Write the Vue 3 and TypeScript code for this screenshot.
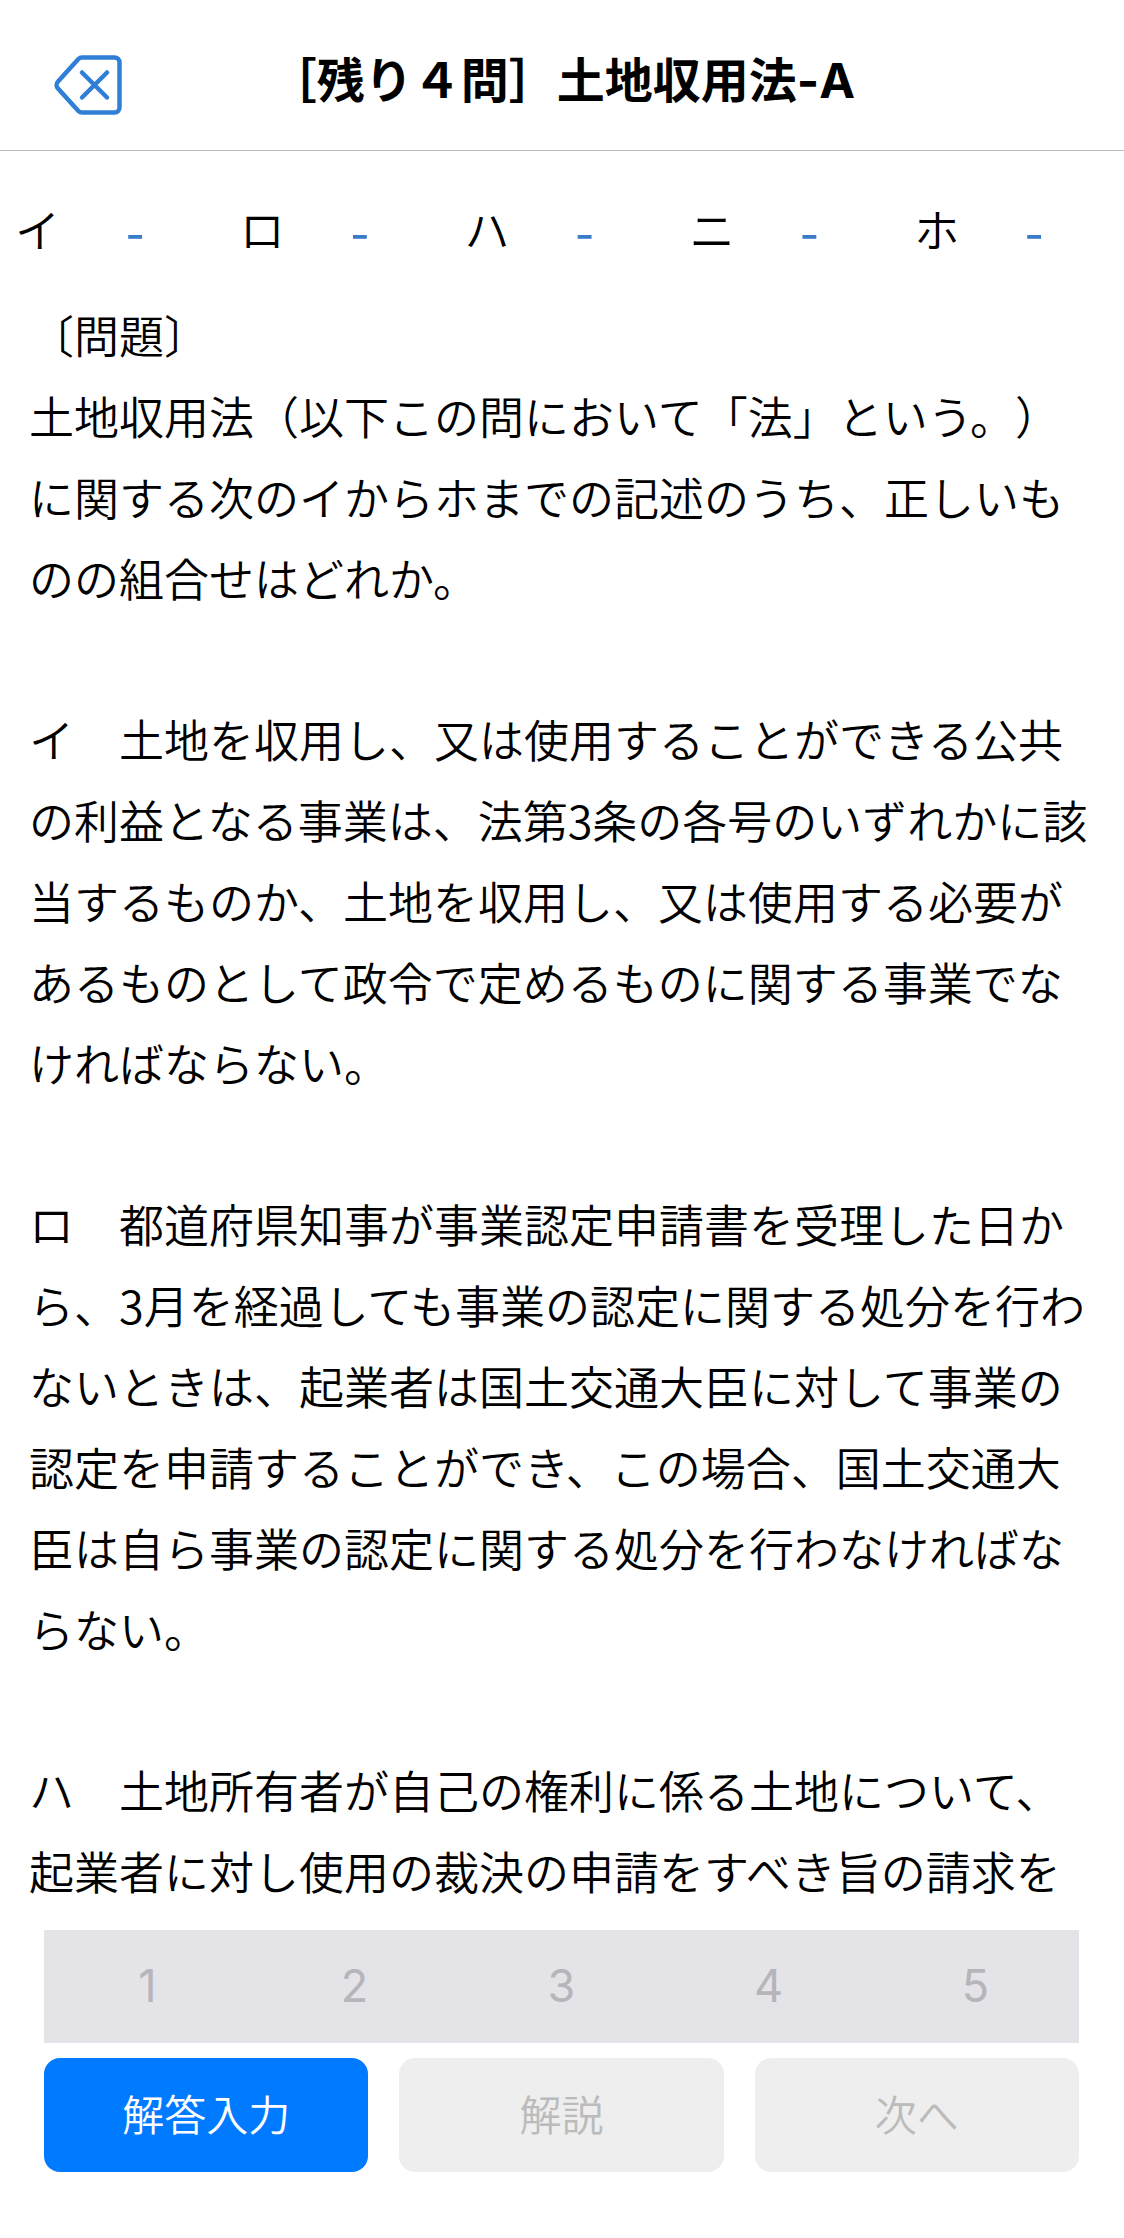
<script setup lang="ts">
const labels: string[] = ['イ', 'ロ', 'ハ', 'ニ', 'ホ']
const choices: number[] = [1, 2, 3, 4, 5]
const body: string = [
  '〔問題〕',
  '土地収用法（以下この問において「法」という。）',
  'に関する次のイからホまでの記述のうち、正しいも',
  'のの組合せはどれか。',
  '',
  'イ　土地を収用し、又は使用することができる公共',
  'の利益となる事業は、法第3条の各号のいずれかに該',
  '当するものか、土地を収用し、又は使用する必要が',
  'あるものとして政令で定めるものに関する事業でな',
  'ければならない。',
  '',
  'ロ　都道府県知事が事業認定申請書を受理した日か',
  'ら、3月を経過しても事業の認定に関する処分を行わ',
  'ないときは、起業者は国土交通大臣に対して事業の',
  '認定を申請することができ、この場合、国土交通大',
  '臣は自ら事業の認定に関する処分を行わなければな',
  'らない。',
  '',
  'ハ　土地所有者が自己の権利に係る土地について、',
  '起業者に対し使用の裁決の申請をすべき旨の請求を',
].join('\n')
</script>

<template>
  <div class="page">
    <header class="header">
      <div class="back">
        <svg class="back-icon" width="68" height="60" viewBox="0 0 68 60" fill="none">
          <path d="M28 2.500H60.500a5 5 0 0 1 5 5V52.500a5 5 0 0 1-5 5H28a5 5 0 0 1-3.600-1.500L4 33.500a5 5 0 0 1 0-7L24.400 4a5 5 0 0 1 3.600-1.500Z" stroke="#2f7fd6" stroke-width="4.500" stroke-linejoin="round" />
          <path d="M28 17.500L53 42.500M53 17.500L28 42.500" stroke="#2f7fd6" stroke-width="4.500" stroke-linecap="round" />
        </svg>
      </div>
      <h1 class="title">［残り４問］土地収用法-A</h1>
      <div></div>
    </header>

    <div class="marks">
      <div v-for="label in labels" :key="label" class="mark">
        <span class="mark-label">{{ label }}</span>
        <span class="mark-dash">-</span>
      </div>
    </div>

    <main class="content">
      <p class="text">{{ body }}</p>
    </main>

    <footer class="footer">
      <div class="choices">
        <span v-for="n in choices" :key="n" class="choice">{{ n }}</span>
      </div>
      <div class="actions">
        <button class="action primary" type="button">解答入力</button>
        <button class="action" type="button">解説</button>
        <button class="action" type="button">次へ</button>
      </div>
    </footer>
  </div>
</template>

<style>
html,
body {
  margin: 0;
  background: #ffffff;
}
</style>

<style scoped>
.page {
  width: 1124px;
  height: 2238px;
  display: flex;
  flex-direction: column;
  overflow: hidden;
  background: #ffffff;
  color: #000000;
  font-family: "Noto Sans CJK JP", "Noto Sans", sans-serif;
  text-spacing-trim: space-all;
}
.header {
  height: 143px;
  flex: none;
  padding-top: 7px;
  display: grid;
  grid-template-columns: 1fr auto 1fr;
  align-items: center;
  border-bottom: 1px solid #bdbdbd;
  box-sizing: content-box;
}
.back {
  padding-left: 54px;
  display: flex;
  align-items: center;
}
.back-icon {
  display: block;
  margin-top: 12px;
}
.title {
  margin: 4px 0 0;
  font-family: Inter, "Noto Sans CJK JP", sans-serif;
  font-size: 48px;
  font-weight: 700;
  line-height: 66px;
  white-space: nowrap;
}
.marks {
  flex: none;
  display: grid;
  grid-template-columns: repeat(5, 1fr);
  padding-top: 37px;
  margin-bottom: 26px;
}
.mark {
  display: flex;
  align-items: center;
  gap: 67px;
  padding-left: 15px;
  font-size: 45px;
  font-weight: 350;
  line-height: 81px;
}
.mark-label {
  width: 45px;
  text-align: center;
}
.mark-dash {
  width: 16px;
  display: flex;
  justify-content: center;
  color: #3a7cc9;
  font-size: 54px;
  font-weight: 400;
}
.content {
  flex: 1;
  min-height: 0;
  overflow: hidden;
  padding: 0 29px;
}
.text {
  margin: 0;
  font-size: 45px;
  font-weight: 350;
  line-height: 80.85px;
  white-space: pre;
}
.footer {
  flex: none;
  padding: 17px 45px 66px 44px;
  display: flex;
  flex-direction: column;
  gap: 15px;
}
.choices {
  height: 113px;
  display: grid;
  grid-template-columns: repeat(5, 1fr);
  align-items: center;
  background: #e3e3e8;
}
.choice {
  padding-bottom: 2px;
  text-align: center;
  font-family: Inter, "Noto Sans", sans-serif;
  font-size: 45px;
  line-height: 56px;
  color: #b5b5ba;
}
.actions {
  display: grid;
  grid-template-columns: repeat(3, 1fr);
  gap: 31px;
}
.action {
  height: 114px;
  border: 0;
  border-radius: 16px;
  padding: 0 0 6px;
  background: #eeeeee;
  color: #bbbbbb;
  font-family: inherit;
  font-size: 42px;
  font-weight: 350;
}
.action.primary {
  background: #007aff;
  color: #ffffff;
}
</style>
